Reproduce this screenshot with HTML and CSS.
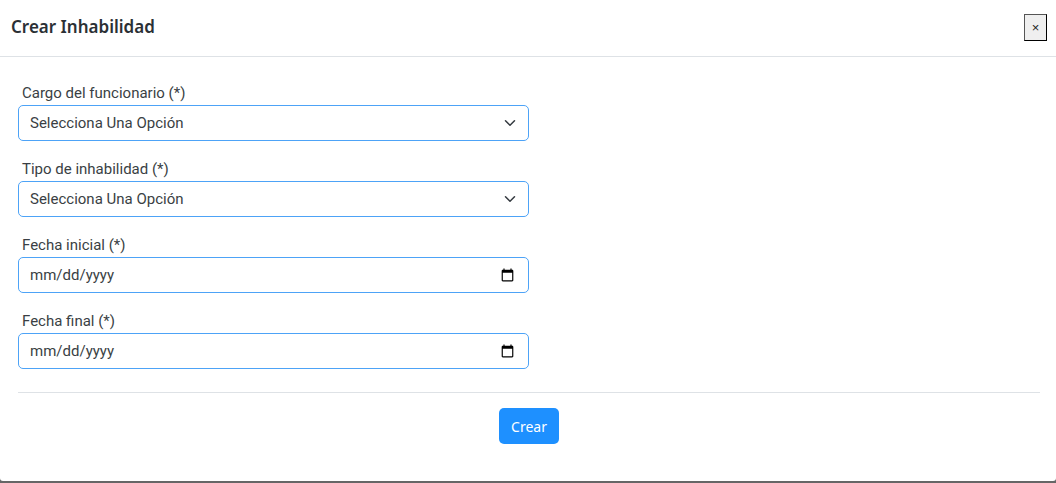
FILE: index.html
```html
<!DOCTYPE html>
<html lang="es">
<head>
<meta charset="UTF-8">
<meta name="viewport" content="width=device-width, initial-scale=1.0">
<title>Crear Inhabilidad</title>
<link rel="stylesheet" href="styles.css">
</head>
<body>
  <div class="modal">
    <header class="modal-header">
      <h1 class="modal-title">Crear Inhabilidad</h1>
      <button type="button" class="btn-close" aria-label="Cerrar">&times;</button>
    </header>

    <form class="modal-body">
      <div class="fields">
        <div class="field">
          <label for="cargo">Cargo del funcionario (*)</label>
          <div class="control">
            <select id="cargo" name="cargo">
              <option value="">Selecciona Una Opción</option>
            </select>
            <svg class="control-icon" viewBox="0 0 16 16" aria-hidden="true">
              <path d="M2 5l6 6 6-6" fill="none" stroke="#343a40" stroke-width="2" stroke-linecap="round" stroke-linejoin="round"/>
            </svg>
          </div>
        </div>

        <div class="field">
          <label for="tipo">Tipo de inhabilidad (*)</label>
          <div class="control">
            <select id="tipo" name="tipo">
              <option value="">Selecciona Una Opción</option>
            </select>
            <svg class="control-icon" viewBox="0 0 16 16" aria-hidden="true">
              <path d="M2 5l6 6 6-6" fill="none" stroke="#343a40" stroke-width="2" stroke-linecap="round" stroke-linejoin="round"/>
            </svg>
          </div>
        </div>

        <div class="field">
          <label for="fecha-inicial">Fecha inicial (*)</label>
          <input type="date" id="fecha-inicial" name="fecha_inicial">
        </div>

        <div class="field">
          <label for="fecha-final">Fecha final (*)</label>
          <input type="date" id="fecha-final" name="fecha_final">
        </div>
      </div>

      <div class="actions">
        <button type="submit" class="btn-primary">Crear</button>
      </div>
    </form>
  </div>
</body>
</html>
```
FILE: styles.css
```css
* {
  box-sizing: border-box;
}

body {
  margin: 0;
  background-color: #666;
  font-family: Roboto, "Liberation Sans", sans-serif;
  font-size: 15px;
  color: #3a3f44;
}

/* Modal */
.modal {
  background-color: #fff;
  border-radius: 0 0 3px 3px;
}

.modal-header {
  display: flex;
  align-items: center;
  justify-content: space-between;
  padding: 13px 9px 15px 11px;
  border-bottom: 1px solid #dee2e6;
}

.modal-title {
  margin: 0;
  font-family: "Noto Sans", "Open Sans", sans-serif;
  font-size: 17px;
  font-weight: 600;
  line-height: 28px;
  color: #2b3035;
}

.btn-close {
  width: 23px;
  height: 27px;
  padding: 0;
  border: 1px solid #000;
  border-top-color: #555;
  border-left-color: #555;
  background-color: #efefef;
  font-family: "Liberation Sans", sans-serif;
  font-size: 13px;
  color: #222;
  cursor: pointer;
}

.modal-body {
  padding: 26px 16px 37px 18px;
}

/* Fields */
.fields {
  display: flex;
  flex-direction: column;
  gap: 18px;
  width: 50%;
}

.field label {
  display: block;
  margin-bottom: 2px;
  padding-left: 4px;
  line-height: 20px;
}

.field select,
.field input {
  display: block;
  width: 100%;
  height: 36px;
  padding: 0 11px;
  border: 1px solid #4da3f7;
  border-radius: 5px;
  background-color: #fff;
  font-family: inherit;
  font-size: 15px;
  color: inherit;
}

.field select {
  appearance: none;
}

.field input::-webkit-datetime-edit-month-field,
.field input::-webkit-datetime-edit-day-field,
.field input::-webkit-datetime-edit-year-field {
  padding: 0;
}

.control {
  position: relative;
}

/* Arrow drawn over the select */
.control-icon {
  position: absolute;
  top: 12px;
  right: 13px;
  width: 12px;
  height: 12px;
  pointer-events: none;
}

/* Footer */
.actions {
  display: flex;
  justify-content: center;
  margin-top: 23px;
  padding-top: 15px;
  border-top: 1px solid #dee2e6;
}

.btn-primary {
  height: 36px;
  padding: 0 12px;
  border: none;
  border-radius: 5px;
  background-color: #1e90ff;
  font-family: "Noto Sans", "Open Sans", sans-serif;
  font-size: 14px;
  color: #fff;
  cursor: pointer;
}
```
